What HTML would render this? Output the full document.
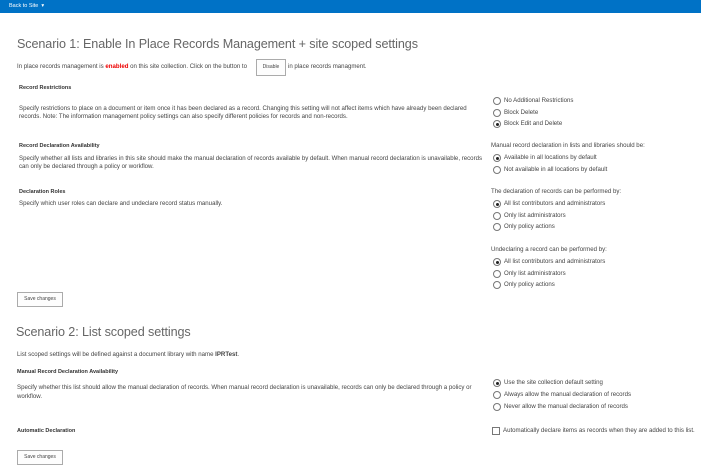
<!DOCTYPE html>
<html><head><meta charset="utf-8"><style>
*{margin:0;padding:0;box-sizing:border-box}
body{width:701px;height:469px;background:#fff;font-family:"Liberation Sans",sans-serif;color:#444;position:relative;overflow:hidden}
.a{position:absolute;white-space:nowrap;font-size:6.1px;line-height:7px}
.bar{position:absolute;left:0;top:0;width:701px;height:13px;background:#0072c6}
.h{position:absolute;font-size:12.6px;color:#666;font-weight:normal;white-space:nowrap;letter-spacing:-0.1px}
.b{font-weight:bold;color:#333;font-size:5.5px}
.btn{position:absolute;border:1px solid #ababab;background:#fdfdfd;font-size:5px;color:#444;text-align:center}
.r{position:absolute;width:8px;height:8px;border:1px solid #777;border-radius:50%;background:#fff}
.r.on::after{content:"";position:absolute;left:1.5px;top:1.5px;width:3px;height:3px;border-radius:50%;background:#222}
</style></head><body>
<div class="bar"></div>
<div class="a" style="left:9px;top:3px;color:#fff;font-size:5.5px">Back to Site &nbsp;▾</div>
<div class="h" style="left:17px;top:37px">Scenario 1: Enable In Place Records Management + site scoped settings</div>
<div class="a" style="left:17px;top:63px">In place records management is <b style="color:#e00">enabled</b> on this site collection. Click on the button to</div>
<div class="btn" style="left:256px;top:59px;width:30px;height:17px;line-height:15px">Disable</div>
<div class="a" style="left:288px;top:63px">in place records managment.</div>
<div class="a b" style="left:19px;top:85px">Record Restrictions</div>
<div class="a" style="left:19px;top:105px">Specify restrictions to place on a document or item once it has been declared as a record. Changing this setting will not affect items which have already been declared</div>
<div class="a" style="left:19px;top:113px">records. Note: The information management policy settings can also specify different policies for records and non-records.</div>
<div class="r" style="left:493px;top:97px"></div><div class="a" style="left:504px;top:97px">No Additional Restrictions</div>
<div class="r" style="left:493px;top:109px"></div><div class="a" style="left:504px;top:109px">Block Delete</div>
<div class="r on" style="left:493px;top:120px"></div><div class="a" style="left:504px;top:120px">Block Edit and Delete</div>
<div class="a b" style="left:19px;top:143px">Record Declaration Availability</div>
<div class="a" style="left:19px;top:155px">Specify whether all lists and libraries in this site should make the manual declaration of records available by default. When manual record declaration is unavailable, records</div>
<div class="a" style="left:19px;top:163px">can only be declared through a policy or workflow.</div>
<div class="a" style="left:491px;top:142px">Manual record declaration in lists and libraries should be:</div>
<div class="r on" style="left:493px;top:154px"></div><div class="a" style="left:504px;top:154px">Available in all locations by default</div>
<div class="r" style="left:493px;top:166px"></div><div class="a" style="left:504px;top:166px">Not available in all locations by default</div>
<div class="a b" style="left:19px;top:189px">Declaration Roles</div>
<div class="a" style="left:19px;top:200px">Specify which user roles can declare and undeclare record status manually.</div>
<div class="a" style="left:491px;top:188px">The declaration of records can be performed by:</div>
<div class="r on" style="left:493px;top:200px"></div><div class="a" style="left:504px;top:200px">All list contributors and administrators</div>
<div class="r" style="left:493px;top:212px"></div><div class="a" style="left:504px;top:212px">Only list administrators</div>
<div class="r" style="left:493px;top:223px"></div><div class="a" style="left:504px;top:223px">Only policy actions</div>
<div class="a" style="left:491px;top:246px">Undeclaring a record can be performed by:</div>
<div class="r on" style="left:493px;top:258px"></div><div class="a" style="left:504px;top:258px">All list contributors and administrators</div>
<div class="r" style="left:493px;top:270px"></div><div class="a" style="left:504px;top:270px">Only list administrators</div>
<div class="r" style="left:493px;top:281px"></div><div class="a" style="left:504px;top:281px">Only policy actions</div>
<div class="btn" style="left:17px;top:292px;width:46px;height:15px;line-height:13px">Save changes</div>
<div class="h" style="left:16px;top:325px">Scenario 2: List scoped settings</div>
<div class="a" style="left:17px;top:351px">List scoped settings will be defined against a document library with name <b>IPRTest</b>.</div>
<div class="a b" style="left:17px;top:369px">Manual Record Declaration Availability</div>
<div class="a" style="left:17px;top:384px">Specify whether this list should allow the manual declaration of records. When manual record declaration is unavailable, records can only be declared through a policy or</div>
<div class="a" style="left:17px;top:393px">workflow.</div>
<div class="r on" style="left:493px;top:379px"></div><div class="a" style="left:504px;top:379px">Use the site collection default setting</div>
<div class="r" style="left:493px;top:391px"></div><div class="a" style="left:504px;top:391px">Always allow the manual declaration of records</div>
<div class="r" style="left:493px;top:403px"></div><div class="a" style="left:504px;top:403px">Never allow the manual declaration of records</div>
<div class="a b" style="left:17px;top:428px">Automatic Declaration</div>
<div style="position:absolute;left:492px;top:427px;width:8px;height:8px;border:1px solid #777"></div>
<div class="a" style="left:503px;top:427px">Automatically declare items as records when they are added to this list.</div>
<div class="btn" style="left:17px;top:450px;width:46px;height:15px;line-height:13px">Save changes</div>
</body></html>
